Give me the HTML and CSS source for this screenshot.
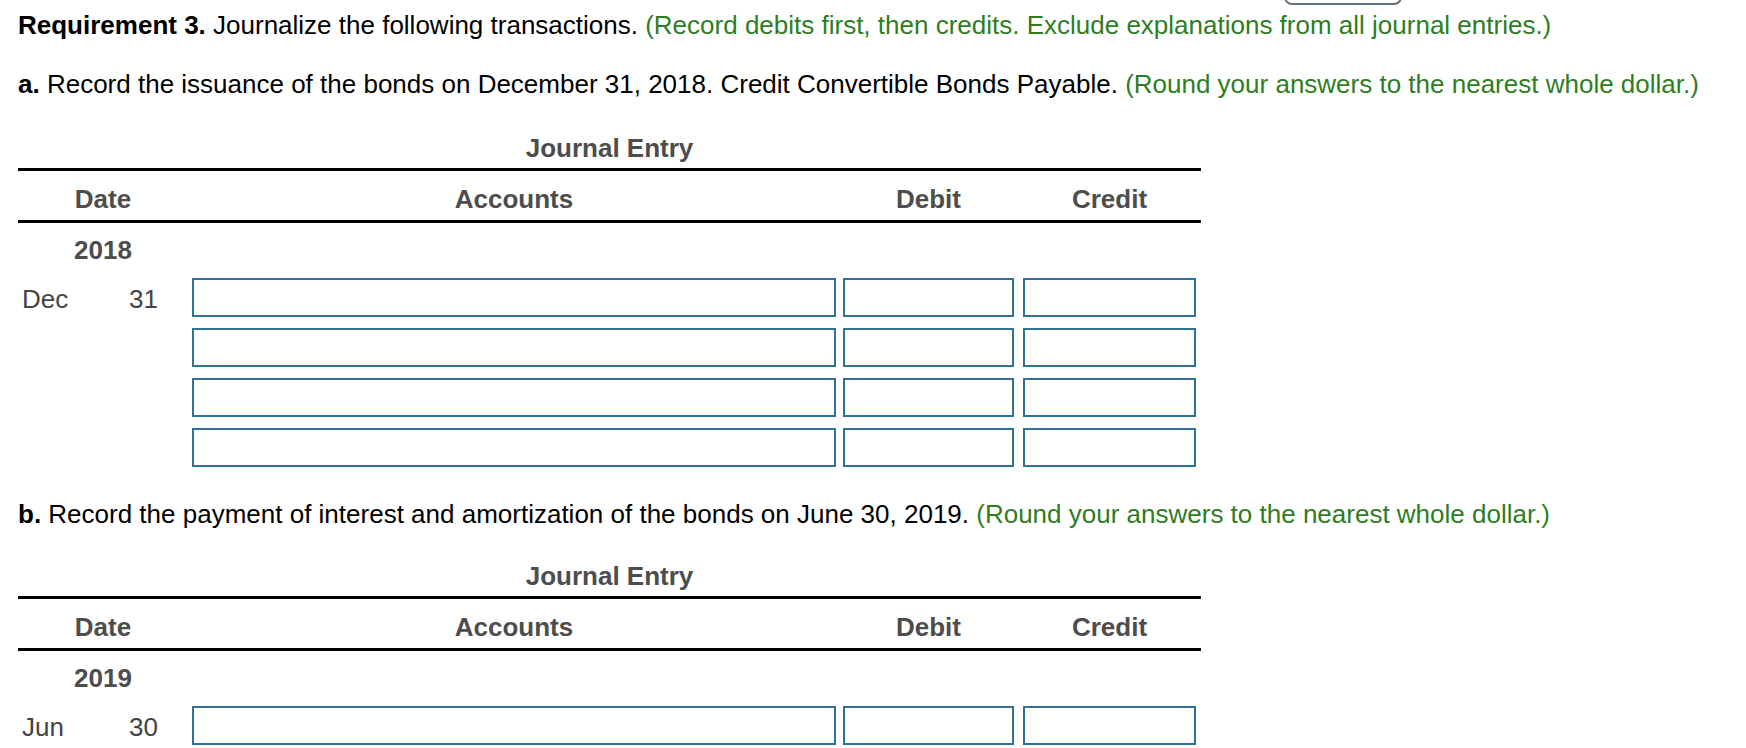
FILE: index.html
```html
<!DOCTYPE html>
<html lang="en">
<head>
    <meta charset="UTF-8">
    <title>Requirement 3</title>
    <link rel="stylesheet" href="styles.css">
</head>
<body>
    <div class="top-btn"></div>
    <div class="container">
        <p class="req"><strong>Requirement 3.</strong> Journalize the following transactions. <span class="hint">(Record debits first, then credits. Exclude explanations from all journal entries.)</span></p>

        <p class="task"><strong>a.</strong> Record the issuance of the bonds on December 31, 2018. Credit Convertible Bonds Payable. <span class="hint">(Round your answers to the nearest whole dollar.)</span></p>

        <div class="journal">
            <div class="journal-title">Journal Entry</div>
            <div class="row head">
                <div class="c-date">Date</div>
                <div class="c-acct">Accounts</div>
                <div class="c-debit">Debit</div>
                <div class="c-credit">Credit</div>
            </div>
            <div class="row year">
                <div class="c-date">2018</div>
            </div>
            <div class="row entry">
                <div class="c-date"><span>Dec</span><span>31</span></div>
                <input class="c-acct" type="text">
                <input class="c-debit" type="text">
                <input class="c-credit" type="text">
            </div>
            <div class="row entry">
                <div class="c-date"></div>
                <input class="c-acct" type="text">
                <input class="c-debit" type="text">
                <input class="c-credit" type="text">
            </div>
            <div class="row entry">
                <div class="c-date"></div>
                <input class="c-acct" type="text">
                <input class="c-debit" type="text">
                <input class="c-credit" type="text">
            </div>
            <div class="row entry">
                <div class="c-date"></div>
                <input class="c-acct" type="text">
                <input class="c-debit" type="text">
                <input class="c-credit" type="text">
            </div>
        </div>

        <p class="task task-b"><strong>b.</strong> Record the payment of interest and amortization of the bonds on June 30, 2019. <span class="hint">(Round your answers to the nearest whole dollar.)</span></p>

        <div class="journal journal-b">
            <div class="journal-title">Journal Entry</div>
            <div class="row head">
                <div class="c-date">Date</div>
                <div class="c-acct">Accounts</div>
                <div class="c-debit">Debit</div>
                <div class="c-credit">Credit</div>
            </div>
            <div class="row year">
                <div class="c-date">2019</div>
            </div>
            <div class="row entry">
                <div class="c-date"><span>Jun</span><span>30</span></div>
                <input class="c-acct" type="text">
                <input class="c-debit" type="text">
                <input class="c-credit" type="text">
            </div>
            <div class="row entry">
                <div class="c-date"></div>
                <input class="c-acct" type="text">
                <input class="c-debit" type="text">
                <input class="c-credit" type="text">
            </div>
        </div>
    </div>
</body>
</html>
```

FILE: styles.css
```css
body {
    margin: 0;
    font-family: "Liberation Sans", Arial, sans-serif;
    font-size: 26px;
    color: #000;
    background: #fff;
    overflow: hidden;
}
.top-btn {
    position: absolute;
    left: 1284px;
    top: -30px;
    width: 114px;
    height: 31px;
    border: 2px solid #65707c;
    border-radius: 8px;
}
.container {
    padding: 10px 0 0 18px;
}
p {
    margin: 0;
    line-height: 30px;
}
.hint {
    color: #2e7d1f;
}
.task {
    margin-top: 29px;
}
.task-b {
    margin-top: 21px;
}
.journal {
    width: 1183px;
}
.journal-title {
    text-align: center;
    font-weight: bold;
    color: #4d4d4d;
    line-height: 30px;
    margin-top: 34px;
    padding-bottom: 5px;
    border-bottom: 3px solid #000;
}
.journal-b .journal-title {
    margin-top: 32px;
}
.row {
    display: flex;
    align-items: center;
}
.head {
    box-sizing: border-box;
    height: 52px;
    padding-top: 7px;
    font-weight: bold;
    color: #4d4d4d;
    text-align: center;
    border-bottom: 3px solid #000;
}
.year {
    height: 55px;
    font-weight: bold;
    color: #4d4d4d;
    text-align: center;
}
.entry {
    height: 50px;
    align-items: flex-start;
}
.c-date {
    width: 170px;
    flex: none;
}
.entry .c-date {
    display: flex;
    justify-content: space-between;
    box-sizing: border-box;
    padding: 6px 30px 0 4px;
    color: #444;
}
.c-acct {
    width: 644px;
    margin-left: 4px;
}
.c-debit {
    width: 171px;
    margin-left: 7px;
}
.c-credit {
    width: 173px;
    margin-left: 9px;
}
input {
    box-sizing: border-box;
    height: 39px;
    border: 2px solid #2f7295;
    border-radius: 0;
    padding: 0 6px;
    font: inherit;
    background: #fff;
    flex: none;
}
```
